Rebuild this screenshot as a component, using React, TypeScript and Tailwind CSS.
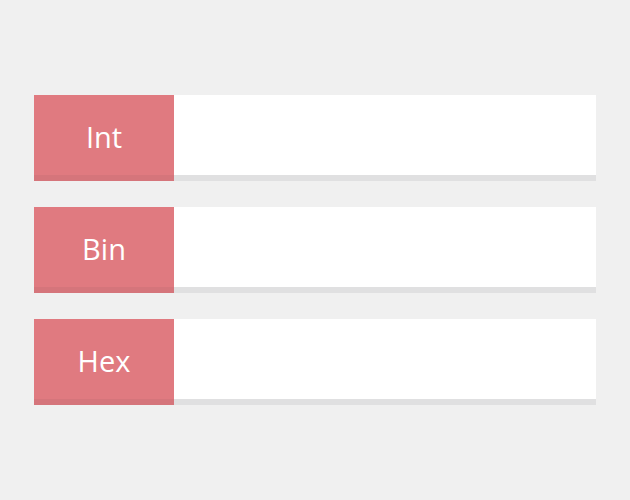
import React from 'react';

const rows = ['Int', 'Bin', 'Hex'];

export default function App() {
  return (
    <div
      className="min-h-[500px] w-full bg-[#f0f0f0] px-[34px] pt-[95px] flex flex-col gap-[26px]"
      style={{ fontFamily: '"Open Sans", "Noto Sans", sans-serif' }}
    >
      {rows.map((r) => (
        <div key={r} className="flex h-[86px]">
          <div className="w-[140px] bg-[#e07a80] border-b-[6px] border-[#d5757b] flex items-center justify-center pt-[3px] text-white text-[29px]">
            {r}
          </div>
          <input
            className="flex-1 bg-white border-0 border-b-[6px] border-[#e0e0e1] outline-none px-4 text-[28px]"
            type="text"
          />
        </div>
      ))}
    </div>
  );
}
